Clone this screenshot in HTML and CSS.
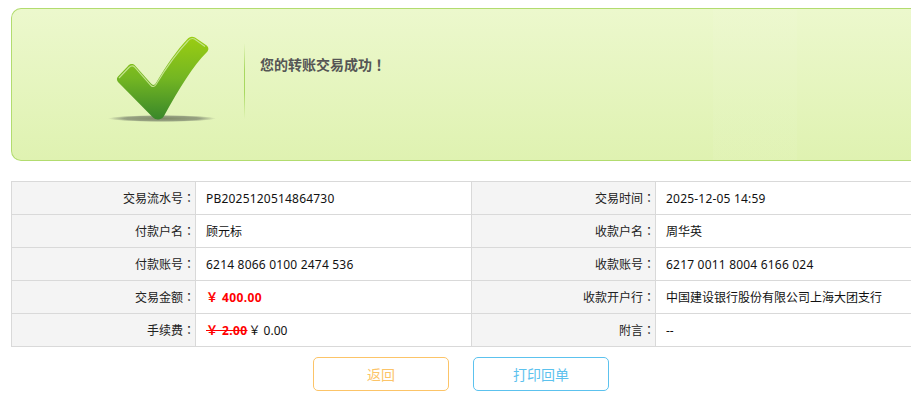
FILE: index.html
```html
<!DOCTYPE html>
<html lang="zh-CN">
<head>
<meta charset="utf-8">
<title>转账结果</title>
<link rel="stylesheet" href="styles.css">
</head>
<body>
<main class="page">
  <section class="banner">
    <div class="banner-icon">
      <svg class="tick" width="112" height="92" viewBox="0 0 112 92" aria-hidden="true">
        <defs>
          <linearGradient id="tickFill" x1="0" y1="0" x2="0" y2="1">
            <stop offset="0" stop-color="#9bcd12"/>
            <stop offset="0.5" stop-color="#74b622"/>
            <stop offset="1" stop-color="#38872a"/>
          </linearGradient>
          <radialGradient id="shadowFill" cx="0.5" cy="0.5" r="0.5">
            <stop offset="0" stop-color="#7f8a68"/>
            <stop offset="0.7" stop-color="#97a282"/>
            <stop offset="1" stop-color="#97a282" stop-opacity="0"/>
          </radialGradient>
        </defs>
        <ellipse cx="54" cy="85.500" rx="54" ry="3.500" fill="url(#shadowFill)"/>
        <path d="M10 49 C8.500 47 8.500 45 10 43.500 L20 33 C22 30.500 25 30.500 27 32.500 L43 50.500 C44.500 52.500 46.500 52.500 48 50 C58 33 69 17 79 6.500 C81.500 3.500 84 3 87 4.500 L98 12 C101 14 101 17 99 19 C85 33 72 54 56 83 C54 87 48 87.500 45 84.500 Z" fill="url(#tickFill)"/>
        <path d="M11 45 L21 34.500 C23 32.500 25 32.500 26.500 34 L43 52.500 C44.500 54 46.500 54 48 51.500 C58 35 69.500 19 80 8 C82 5.500 84 5 86.500 6 L97 13.500" fill="none" stroke="#c3e38c" stroke-width="1.100"/>
      </svg>
    </div>
    <p class="banner-text">您的转账交易成功<span class="mark" lang="zh-TW">！</span></p>
  </section>

  <table class="detail">
    <colgroup>
      <col class="col-label"><col class="col-value"><col class="col-label"><col>
    </colgroup>
    <tbody>
      <tr>
        <th>交易流水号<span class="mark" lang="zh-TW">：</span></th><td class="num">PB2025120514864730</td>
        <th>交易时间<span class="mark" lang="zh-TW">：</span></th><td class="num">2025-12-05 14:59</td>
      </tr>
      <tr>
        <th>付款户名<span class="mark" lang="zh-TW">：</span></th><td>顾元标</td>
        <th>收款户名<span class="mark" lang="zh-TW">：</span></th><td>周华英</td>
      </tr>
      <tr>
        <th>付款账号<span class="mark" lang="zh-TW">：</span></th><td class="num">6214 8066 0100 2474 536</td>
        <th>收款账号<span class="mark" lang="zh-TW">：</span></th><td class="num">6217 0011 8004 6166 024</td>
      </tr>
      <tr>
        <th>交易金额<span class="mark" lang="zh-TW">：</span></th><td><span class="amount">￥ 400.00</span></td>
        <th>收款开户行<span class="mark" lang="zh-TW">：</span></th><td>中国建设银行股份有限公司上海大团支行</td>
      </tr>
      <tr>
        <th>手续费<span class="mark" lang="zh-TW">：</span></th><td><del class="amount struck">￥ 2.00</del>￥ 0.00</td>
        <th>附言<span class="mark" lang="zh-TW">：</span></th><td>--</td>
      </tr>
    </tbody>
  </table>

  <div class="actions">
    <button class="btn btn-back" type="button">返回</button>
    <button class="btn btn-print" type="button">打印回单</button>
  </div>
</main>
</body>
</html>
```

FILE: styles.css
```css
html {
  overflow: hidden;
}

body {
  margin: 8px 0 0 11px;
  background: #fff;
  color: #222;
  font-family: "Noto Sans", "Noto Sans CJK SC", sans-serif;
  font-size: 12px;
}

.page {
  width: 900px;
}

.mark {
  font-family: "Noto Sans CJK TC", sans-serif;
}

.banner {
  display: flex;
  box-sizing: border-box;
  height: 153px;
  border: 1px solid #b2dc6f;
  border-right: 0;
  border-radius: 10px 0 0 10px;
  background: linear-gradient(#ecf8cd, #dff2b1);
}

.banner-icon {
  position: relative;
  flex: none;
  box-sizing: border-box;
  width: 233px;
  padding: 24px 0 0 96px;
}

.banner-icon::after {
  content: "";
  position: absolute;
  top: 34px;
  right: 0;
  width: 1px;
  height: 76px;
  background: linear-gradient(transparent, #a8d860 35%, #a8d860 65%, transparent);
}

.tick {
  display: block;
}

.banner-text {
  flex: 1;
  margin: 0;
  padding: 46px 0 0 15px;
  background: linear-gradient(90deg, transparent 468px, rgba(255, 255, 255, 0.05) 468px, rgba(255, 255, 255, 0.05) 552px, transparent 552px);
  color: #555;
  font-size: 14px;
  font-weight: 700;
  line-height: 18px;
}

.detail {
  width: 901px;
  margin-top: 20px;
  border-collapse: collapse;
  table-layout: fixed;
}

.col-label {
  width: 184px;
}

.col-value {
  width: 276px;
}

.detail th,
.detail td {
  box-sizing: border-box;
  height: 33px;
  padding: 0;
  border: 1px solid #d9d9d9;
  font-size: 12px;
  font-weight: 400;
}

.detail th {
  background: #f4f4f4;
  text-align: right;
}

.detail td {
  padding-left: 10px;
  color: #111;
}

.detail .num {
  letter-spacing: 0.2px;
}

.amount {
  color: #f00;
  font-weight: 700;
  letter-spacing: 0.4px;
}

.struck {
  margin-right: 1px;
  text-decoration-color: #f00;
}

.actions {
  display: flex;
  justify-content: center;
  gap: 24px;
  margin-top: 10px;
}

.btn {
  box-sizing: border-box;
  width: 136px;
  height: 34px;
  padding: 0;
  border: 1px solid;
  border-radius: 5px;
  background: #fff;
  font-family: inherit;
  font-size: 14px;
}

.btn-back {
  border-color: #fcc468;
  color: #fcc468;
}

.btn-print {
  border-color: #5cc2ee;
  color: #5cc2ee;
}
```
